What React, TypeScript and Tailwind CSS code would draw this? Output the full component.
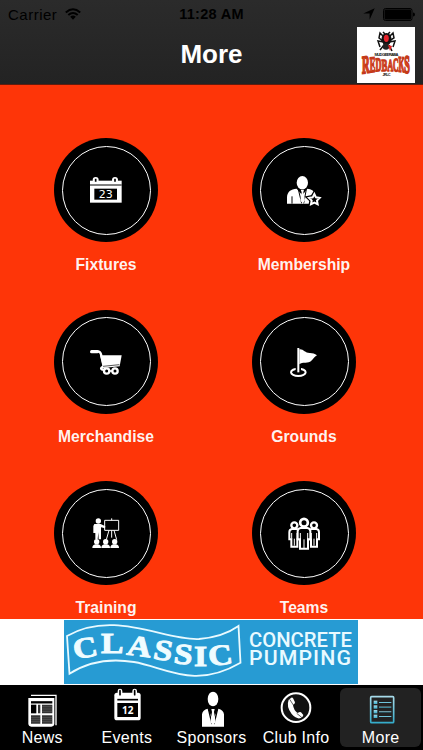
import type { ReactNode } from "react";

const FixturesIcon = () => (
  <>
    <rect x="-48" y="-28" width="95" height="66" fill="#fff" />
    <path d="M-48-15H47" stroke="#000" strokeWidth="3" />
    <circle cx="-31" cy="-30" r="9" fill="#fff" />
    <circle cx="27" cy="-30" r="9" fill="#fff" />
    <path d="M-31-34v9M27-34v9" stroke="#000" strokeWidth="5" />
    <rect x="-35" y="-4" width="68" height="33" fill="#000" />
    <text x="-1" y="25" textAnchor="middle" fontSize="33" fill="#fff" className="font-['DejaVu_Sans']">
      23
    </text>
  </>
);

const MembershipIcon = () => (
  <>
    <ellipse cx="-5" cy="-22" rx="17" ry="20" fill="#fff" />
    <path d="M-51 41V22C-50 4-40-2-22-4L-5 16 10-4C22-3 30 2 33 11L18 41Z" fill="#fff" />
    <path d="M-17-2-7 40M7-2-1 40M-36 19v22" stroke="#000" strokeWidth="3" />
    <path d="M-10-1H0L-2 7 3 31-4 41-11 31-7 7Z" fill="#fff" />
    <path
      d="m31 11 5 10 12 2-9 8 2 12-10-6-11 6 2-12-8-8 11-2Z"
      fill="#000"
      stroke="#000"
      strokeWidth="12"
    />
    <path d="m31 12 5 10 11 2-8 8 2 11-10-5-10 5 2-11-8-8 11-2Z" fill="#000" stroke="#fff" strokeWidth="6" />
  </>
);

const MerchandiseIcon = () => (
  <>
    <path
      d="M-41-32H-25Q-17-32-15-23L-8 9Q-6 14-12 16-18 20-11 23H-4"
      fill="none"
      stroke="#fff"
      strokeWidth="7"
      strokeLinecap="round"
    />
    <path d="M-43-31H-26" stroke="#fff" strokeWidth="10" strokeLinecap="round" />
    <path d="M-18-20H47L41 13-8 18Z" fill="#fff" />
    <path d="M-9 13 40 8" stroke="#000" strokeWidth="2" />
    <circle cx="2" cy="27" r="8" fill="#000" stroke="#fff" strokeWidth="7" />
    <circle cx="27" cy="27" r="8" fill="#000" stroke="#fff" strokeWidth="7" />
    <path d="M8 27h13" stroke="#fff" strokeWidth="5" />
  </>
);

const GroundsIcon = () => (
  <>
    <ellipse cx="-17" cy="31" rx="22" ry="11" fill="none" stroke="#fff" strokeWidth="6" />
    <path d="M-17 12v20" stroke="#000" strokeWidth="16" />
    <path d="M-17-42v73" stroke="#fff" strokeWidth="6" />
    <path d="M-14-38C-2-40 4-26 18-27 26-27 32-25 39-20 26-13 27-3 14 1 5 4-5-1-14 7Z" fill="#fff" />
  </>
);

const TrainingIcon = () => (
  <>
    <circle cx="-23" cy="-36" r="8" fill="#fff" />
    <path d="M-35-27H-16L-2-20-3-14-15-17-15 19H-22L-23-2-25 19H-32L-32-16V0H-38V-21Z" fill="#fff" />
    <path d="M-4-38H38V-8H-4ZM17-38v-6M9-8 1 20M24-8 32 20M17-8V14" fill="none" stroke="#fff" strokeWidth="3" />
    <g fill="#fff">
      {[-28, -1, 26].map((x) => (
        <g key={x}>
          <circle cx={x} cy="26" r="8" />
          <path d={`M${x - 13} 45Q${x - 13} 36 ${x - 4} 34H${x + 4}Q${x + 13} 36 ${x + 13} 45Z`} />
        </g>
      ))}
    </g>
  </>
);

const TeamsIcon = () => (
  <>
    {[-29, 30].map((x) => (
      <g key={x} transform={`translate(${x} 0)`} fill="#000" stroke="#fff" strokeWidth="6">
        <path d="M-15-2Q-15-11-7-12H7Q15-11 15-2V19H9V41H-9V19H-15Z" />
        <circle cy="-23" r="9" strokeWidth="7" />
        <path d="M-8 0V17M8 0V17M0 17V38" strokeWidth="3" />
      </g>
    ))}
    <g fill="#000" stroke="#fff" strokeWidth="6">
      <path d="M-19-5Q-19-14-10-15H10Q19-14 19-5V19H12V47H-12V19H-19Z" />
      <circle cy="-31" r="11.5" strokeWidth="8" />
      <path d="M-11 0V20M11 0V20M0 19V46" strokeWidth="3" />
    </g>
  </>
);

const tiles: { label: string; icon: ReactNode }[] = [
  { label: "Fixtures", icon: <FixturesIcon /> },
  { label: "Membership", icon: <MembershipIcon /> },
  { label: "Merchandise", icon: <MerchandiseIcon /> },
  { label: "Grounds", icon: <GroundsIcon /> },
  { label: "Training", icon: <TrainingIcon /> },
  { label: "Teams", icon: <TeamsIcon /> },
];

const NewsIcon = () => (
  <>
    <path d="M-33 22H42V112" fill="none" stroke="#fff" strokeWidth="4" />
    <path d="M-41 30H37V106Q37 116 28 116H-32Q-41 116-41 106Z" fill="#fff" />
    <path d="M-33 43H31" stroke="#000" strokeWidth="7" />
    <path d="M-33 50h16v26h-16z" fill="#000" />
    <path d="M-12 50H-5V76H-12ZM0 50H31V76H0ZM-33 82H-5V107H-33ZM0 82H31V107H0Z" fill="#333" />
    <path
      d="M0 56H31M0 63H31M0 70H31M-33 89H-5M-33 95H-5M-33 101H-5M0 89H31M0 95H31M0 101H31"
      stroke="#888"
    />
  </>
);

const EventsIcon = () => (
  <>
    <rect x="-38" y="14" width="79" height="83" rx="8" fill="#fff" />
    <path d="M-21 9v11M23 9v11" stroke="#fff" strokeWidth="14" strokeLinecap="round" />
    <path d="M-21 8v12M23 8v12" stroke="#000" strokeWidth="5" strokeLinecap="round" />
    <path d="M-29 35H33" stroke="#000" strokeWidth="5" />
    <rect x="-29" y="45" width="62" height="42" fill="#000" />
    <text
      x="2"
      y="79"
      textAnchor="middle"
      fontSize="30"
      fontWeight="bold"
      fill="#fff"
      className="font-['Noto_Sans']"
    >
      12
    </text>
  </>
);

const SponsorsIcon = () => (
  <>
    <ellipse cx="6" cy="33" rx="16" ry="22" fill="#fff" />
    <path d="M-27 116V79Q-25 65-10 62L6 94 22 62Q37 65 39 79V116Z" fill="#fff" />
    <path d="M-8 62 3 108M20 62 9 108" stroke="#000" strokeWidth="4" />
    <path d="M1 63H11L9 72 14 101 6 113-2 101 3 72Z" fill="#fff" />
  </>
);

const ClubInfoIcon = () => (
  <>
    <circle cy="59" r="43" fill="#111" stroke="#fff" strokeWidth="6" />
    <path
      d="M-22 35-14 29Q-10 28-8 32L-3 43Q-2 47-9 51-7 67 5 75 12 70 15 73L22 81Q23 86 14 90 3 95-13 78-30 55-22 35Z"
      fill="#fff"
    />
    <path d="M-19 34-8 51M2 76 17 88" stroke="#111" strokeWidth="2" />
  </>
);

const MoreIcon = () => (
  <>
    <defs>
      <linearGradient id="moreFill" x1="0" y1="0" x2="0" y2="1">
        <stop stopColor="#a7dbea" />
        <stop offset="1" stopColor="#35acca" />
      </linearGradient>
    </defs>
    <rect x="-31" y="26" width="69" height="78" rx="3" fill="none" stroke="url(#moreFill)" strokeWidth="5" />
    {[38, 52, 66, 80].map((y) => (
      <g key={y}>
        <rect x="-22" y={y} width="11" height="10" fill="url(#moreFill)" />
        <rect x="-6" y={y + 4} width="37" height="3" fill="url(#moreFill)" />
      </g>
    ))}
  </>
);

const tabs: { label: string; icon: ReactNode; active?: boolean }[] = [
  { label: "News", icon: <NewsIcon /> },
  { label: "Events", icon: <EventsIcon /> },
  { label: "Sponsors", icon: <SponsorsIcon /> },
  { label: "Club Info", icon: <ClubInfoIcon /> },
  { label: "More", icon: <MoreIcon />, active: true },
];

function StatusBar() {
  return (
    <div className="grid h-[27px] grid-cols-3 items-center px-2 pt-px text-[15px] leading-none text-black">
      <div className="flex items-center gap-2 tracking-[0.5px]">
        Carrier
        <svg viewBox="0 0 16 12" className="h-3 w-4" fill="none" stroke="#000" strokeWidth="2">
          <path d="M.8 4.4Q8-2 15.2 4.4M3.3 7Q8 2.9 12.7 7" />
          <path d="M5.2 8.7Q8 6.3 10.8 8.7L8 11.7Z" fill="#000" stroke="none" />
        </svg>
      </div>
      <div className="text-center text-[14.5px] font-bold tracking-[0.3px]">11:28 AM</div>
      <div className="flex items-center justify-end gap-2">
        <svg viewBox="0 0 12 12" className="h-3 w-3">
          <path d="M11.7.3 6.6 11.8V5.5H.3Z" />
        </svg>
        <svg viewBox="0 0 32 13" className="h-[13px] w-8">
          <rect x=".5" y=".5" width="28.5" height="12" rx="2" fill="none" stroke="#000" />
          <rect x="1.5" y="1.5" width="26.5" height="10" rx="1" />
          <path d="M30 4.5q2 0 2 2t-2 2Z" />
        </svg>
      </div>
    </div>
  );
}

// Wordmark is tall at both ends and pinched in the middle
const wordmark = [
  { char: "R", x: 5, y: 46.5, sx: 1.05, sy: 2.5, skew: -8 },
  { char: "E", x: 12.7, y: 45.3, sx: 0.84, sy: 2.2, skew: -6 },
  { char: "D", x: 18.4, y: 44.3, sx: 0.82, sy: 1.9, skew: -4 },
  { char: "B", x: 24.5, y: 43.8, sx: 0.88, sy: 1.75, skew: 0 },
  { char: "A", x: 30.4, y: 43.8, sx: 0.8, sy: 1.75, skew: 0 },
  { char: "C", x: 36.1, y: 44, sx: 0.78, sy: 1.9, skew: 4 },
  { char: "K", x: 41.4, y: 44.6, sx: 0.78, sy: 2.2, skew: 6 },
  { char: "S", x: 47.3, y: 45.5, sx: 1, sy: 2.5, skew: 8 },
];

function ClubLogo() {
  return (
    <svg viewBox="0 0 58 56" className="h-14 w-[58px] bg-white">
      <g fill="none" stroke="#111" strokeWidth="1.5">
        <path d="M28 11 23 6 22 11 26 14M31 11 36 6 37 11 32 14M27 15 21 14 23 20M32 15 38 14 36 20M27 18 23 23M32 18 35 24M28 7 26 5M31 7 33 5" />
      </g>
      <ellipse cx="29.5" cy="12" rx="5" ry="6" fill="#111" />
      <ellipse cx="29.3" cy="11.3" rx="2.5" ry="3.6" fill="#e5232b" />
      <circle cx="29" cy="19.5" r="3.3" fill="#222" />
      <path d="m31 18 4 1-2 5Z" fill="#d22" />
      <text x="29.5" y="28.5" textAnchor="middle" textLength="24" fontSize="4" fontWeight="bold" fill="#111">
        MUDGEERABA
      </text>
      <g
        fontSize="10"
        fontWeight="bold"
        fill="#e8481f"
        stroke="#c43a1a"
        strokeWidth=".8"
        className="font-['Liberation_Serif']"
      >
        {wordmark.map((l) => (
          <text key={l.char} transform={`translate(${l.x} ${l.y}) skewY(${l.skew}) scale(${l.sx} ${l.sy})`}>
            {l.char}
          </text>
        ))}
      </g>
      <text x="29.5" y="49" textAnchor="middle" textLength="8" fontSize="3.6" fontWeight="bold" fill="#111">
        JRLC
      </text>
    </svg>
  );
}

function SponsorBanner() {
  return (
    <div className="flex h-[66px] shrink-0 justify-center bg-white pt-px">
      <svg viewBox="0 0 294 64" className="mr-px h-16 w-[294px] bg-[#279bd3]">
        <path
          d="M3 16C50-11 101 21 135 19Q159 17 174.5 6L176.5 42.7C130 70 101 47 70 42Q33 36 5.5 53.7Z"
          fill="none"
          stroke="#e9faff"
          strokeWidth="1.8"
        />
        <text
          x="9.5 32 53.5 76 94 112 125.5"
          y="39 33 34.5 38.5 43 46 46"
          rotate="-10 0 8 10 6 0 -7"
          transform="scale(1.16 1)"
          fontSize="29"
          fontWeight="bold"
          fill="#effcff"
          stroke="#effcff"
          strokeWidth=".9"
          className="font-['Liberation_Serif']"
        >
          CLASSIC
        </text>
        <g fontSize="19.7" fontWeight="500" fill="#e9faff" className="font-['Roboto']">
          <text x="185" y="26.7" textLength="103" lengthAdjust="spacingAndGlyphs">
            CONCRETE
          </text>
          <text x="185" y="44.7" textLength="103" lengthAdjust="spacingAndGlyphs" letterSpacing="1">
            PUMPING
          </text>
        </g>
      </svg>
    </div>
  );
}

export default function App() {
  return (
    <div className="flex h-[750px] w-[423px] flex-col overflow-hidden bg-black font-['Liberation_Sans',sans-serif]">
      {/* Header */}
      <header className="h-[85px] shrink-0 border-b border-[#631b0d] bg-linear-to-b from-[#2b2b2b] to-[#232323]">
        <StatusBar />
        <div className="grid h-14 grid-cols-3 items-center pr-2">
          <span />
          <h1 className="pb-0.5 pl-2 text-center text-[26px] font-bold leading-none text-white">More</h1>
          <div className="flex justify-end">
            <ClubLogo />
          </div>
        </div>
      </header>

      {/* Menu */}
      <main className="grid h-[534px] shrink-0 auto-rows-[171.5px] grid-cols-[198px_198px] content-start overflow-hidden bg-[#fe3508] pl-[7px] pt-[53px]">
        {tiles.map((tile) => (
          <div key={tile.label} className="flex flex-col items-center">
            <div className="flex size-[104px] items-center justify-center rounded-full bg-black">
              <div className="flex size-[89px] items-center justify-center rounded-full border border-white">
                <svg viewBox="-54 -54 108 108" className="size-9">
                  {tile.icon}
                </svg>
              </div>
            </div>
            <span className="mt-[13px] text-[15.7px] font-bold leading-5 text-white/95">{tile.label}</span>
          </div>
        ))}
      </main>

      <SponsorBanner />

      {/* Tab bar */}
      <nav className="grid h-[65px] grid-cols-5 bg-black pb-[3px] pt-[3px]">
        {tabs.map((tab) => (
          <div
            key={tab.label}
            className={`mx-[2px] flex flex-col items-center whitespace-nowrap rounded-md ${tab.active ? "bg-[#222]" : ""}`}
          >
            <svg viewBox="-60 0 120 120" className="size-10 shrink-0">
              {tab.icon}
            </svg>
            <span className="text-[16px] leading-[19px] tracking-[0.3px] text-white">{tab.label}</span>
          </div>
        ))}
      </nav>
    </div>
  );
}
